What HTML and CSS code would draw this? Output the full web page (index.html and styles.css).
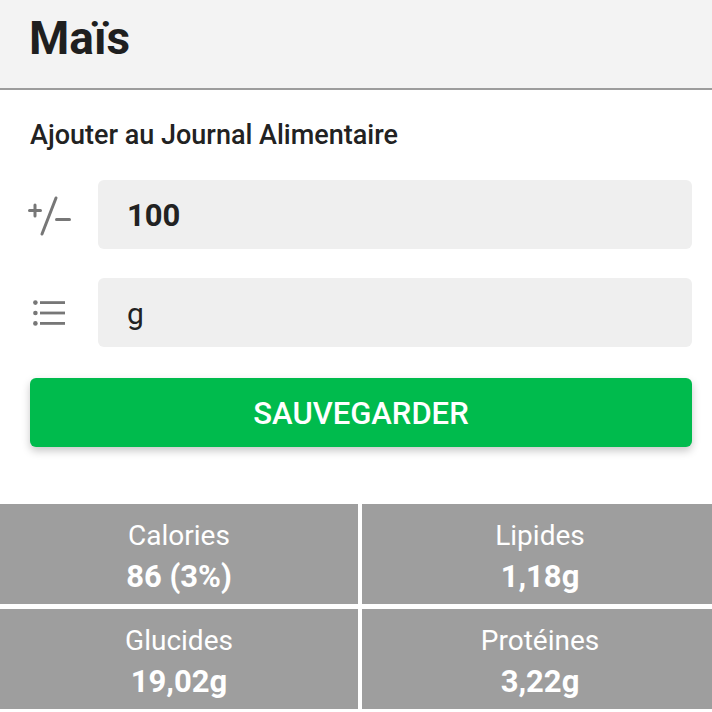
FILE: index.html
```html
<!DOCTYPE html>
<html lang="fr">
<head>
<meta charset="utf-8">
<link rel="stylesheet" href="styles.css">
</head>
<body>
<header class="topbar"><h1 class="title">Maïs</h1></header>
<main class="form">
  <p class="subtitle">Ajouter au Journal Alimentaire</p>
  <div class="field">
    <span class="field-icon">
      <svg width="46" height="46" viewBox="0 0 46 46"><g stroke="#777" stroke-width="3" stroke-linecap="round" fill="none"><path d="M1.5 18.5h11M7 13v11"/><path d="M28 6 14 42"/><path d="M28.5 27.5h13"/></g></svg>
    </span>
    <div class="input bold">100</div>
  </div>
  <div class="field">
    <span class="field-icon list">
      <svg width="36" height="26" viewBox="0 0 36 26"><g fill="#777"><circle cx="2.4" cy="2.6" r="2.3"/><circle cx="2.4" cy="13" r="2.3"/><circle cx="2.4" cy="23.4" r="2.3"/><rect x="7" y="1.2" width="25" height="2.8"/><rect x="7" y="11.6" width="25" height="2.8"/><rect x="7" y="22" width="25" height="2.8"/></g></svg>
    </span>
    <div class="input">g</div>
  </div>
  <button class="save">SAUVEGARDER</button>
</main>
<section class="stats">
  <div class="stat"><span class="stat-label">Calories</span><span class="stat-value">86 (3%)</span></div>
  <div class="stat right"><span class="stat-label">Lipides</span><span class="stat-value">1,18g</span></div>
  <div class="stat"><span class="stat-label">Glucides</span><span class="stat-value">19,02g</span></div>
  <div class="stat right"><span class="stat-label">Protéines</span><span class="stat-value">3,22g</span></div>
</section>
</body>
</html>
```
FILE: styles.css
```css
* { box-sizing: border-box; }
html, body { margin: 0; padding: 0; background: #fff; }
body { font-family: Roboto, "Noto Sans", sans-serif; color: #222; width: 712px; height: 712px; overflow: hidden; }

.topbar {
  height: 90px;
  background: #f3f3f3;
  border-bottom: 2px solid #9c9c9c;
  padding-left: 29px;
  display: flex;
  align-items: center;
}
.title {
  margin: 0 0 12px;
  font-size: 46px;
  font-weight: 700;
  color: #1f1f1f;
}

.form { padding: 0 20px 0 30px; }
.subtitle {
  margin: 0;
  height: 90px;
  display: flex;
  align-items: center;
  font-size: 27px;
  font-weight: 500;
  color: #222;
}
.field {
  display: flex;
  align-items: center;
  margin-bottom: 29px;
}
.field-icon {
  width: 68px;
  display: flex;
  align-items: center;
  margin-left: -2px;
  margin-right: 2px;
}
.field-icon.list { margin-left: 3px; width: 63px; margin-right: 2px; }
.input {
  flex: 1;
  height: 69px;
  background: #efefef;
  border-radius: 6px;
  padding-left: 29px;
  padding-top: 2px;
  display: flex;
  align-items: center;
  font-size: 30px;
  color: #222;
}
.input.bold { font-weight: 700; font-size: 31px; }

.save {
  display: block;
  width: 100%;
  height: 69px;
  margin-top: 31px;
  padding-top: 3px;
  border: none;
  border-radius: 6px;
  background: #00bb4d;
  color: #fff;
  font-family: Roboto, sans-serif;
  font-size: 31px;
  font-weight: 500;
  box-shadow: 0 4px 8px rgba(0,0,0,0.22);
}

.stats {
  margin-top: 57px;
  display: grid;
  grid-template-columns: 358px 1fr;
  grid-auto-rows: 100px;
  column-gap: 4px;
  row-gap: 5px;
}
.stat {
  background: #9e9e9e;
  color: #fff;
  display: flex;
  flex-direction: column;
  align-items: center;
  padding-top: 17px;
}
.stat.right { padding-left: 6px; }
.stat-label { font-size: 28px; line-height: 30px; }
.stat-value { font-size: 31px; line-height: 36px; font-weight: 700; margin-top: 8px; }
```
